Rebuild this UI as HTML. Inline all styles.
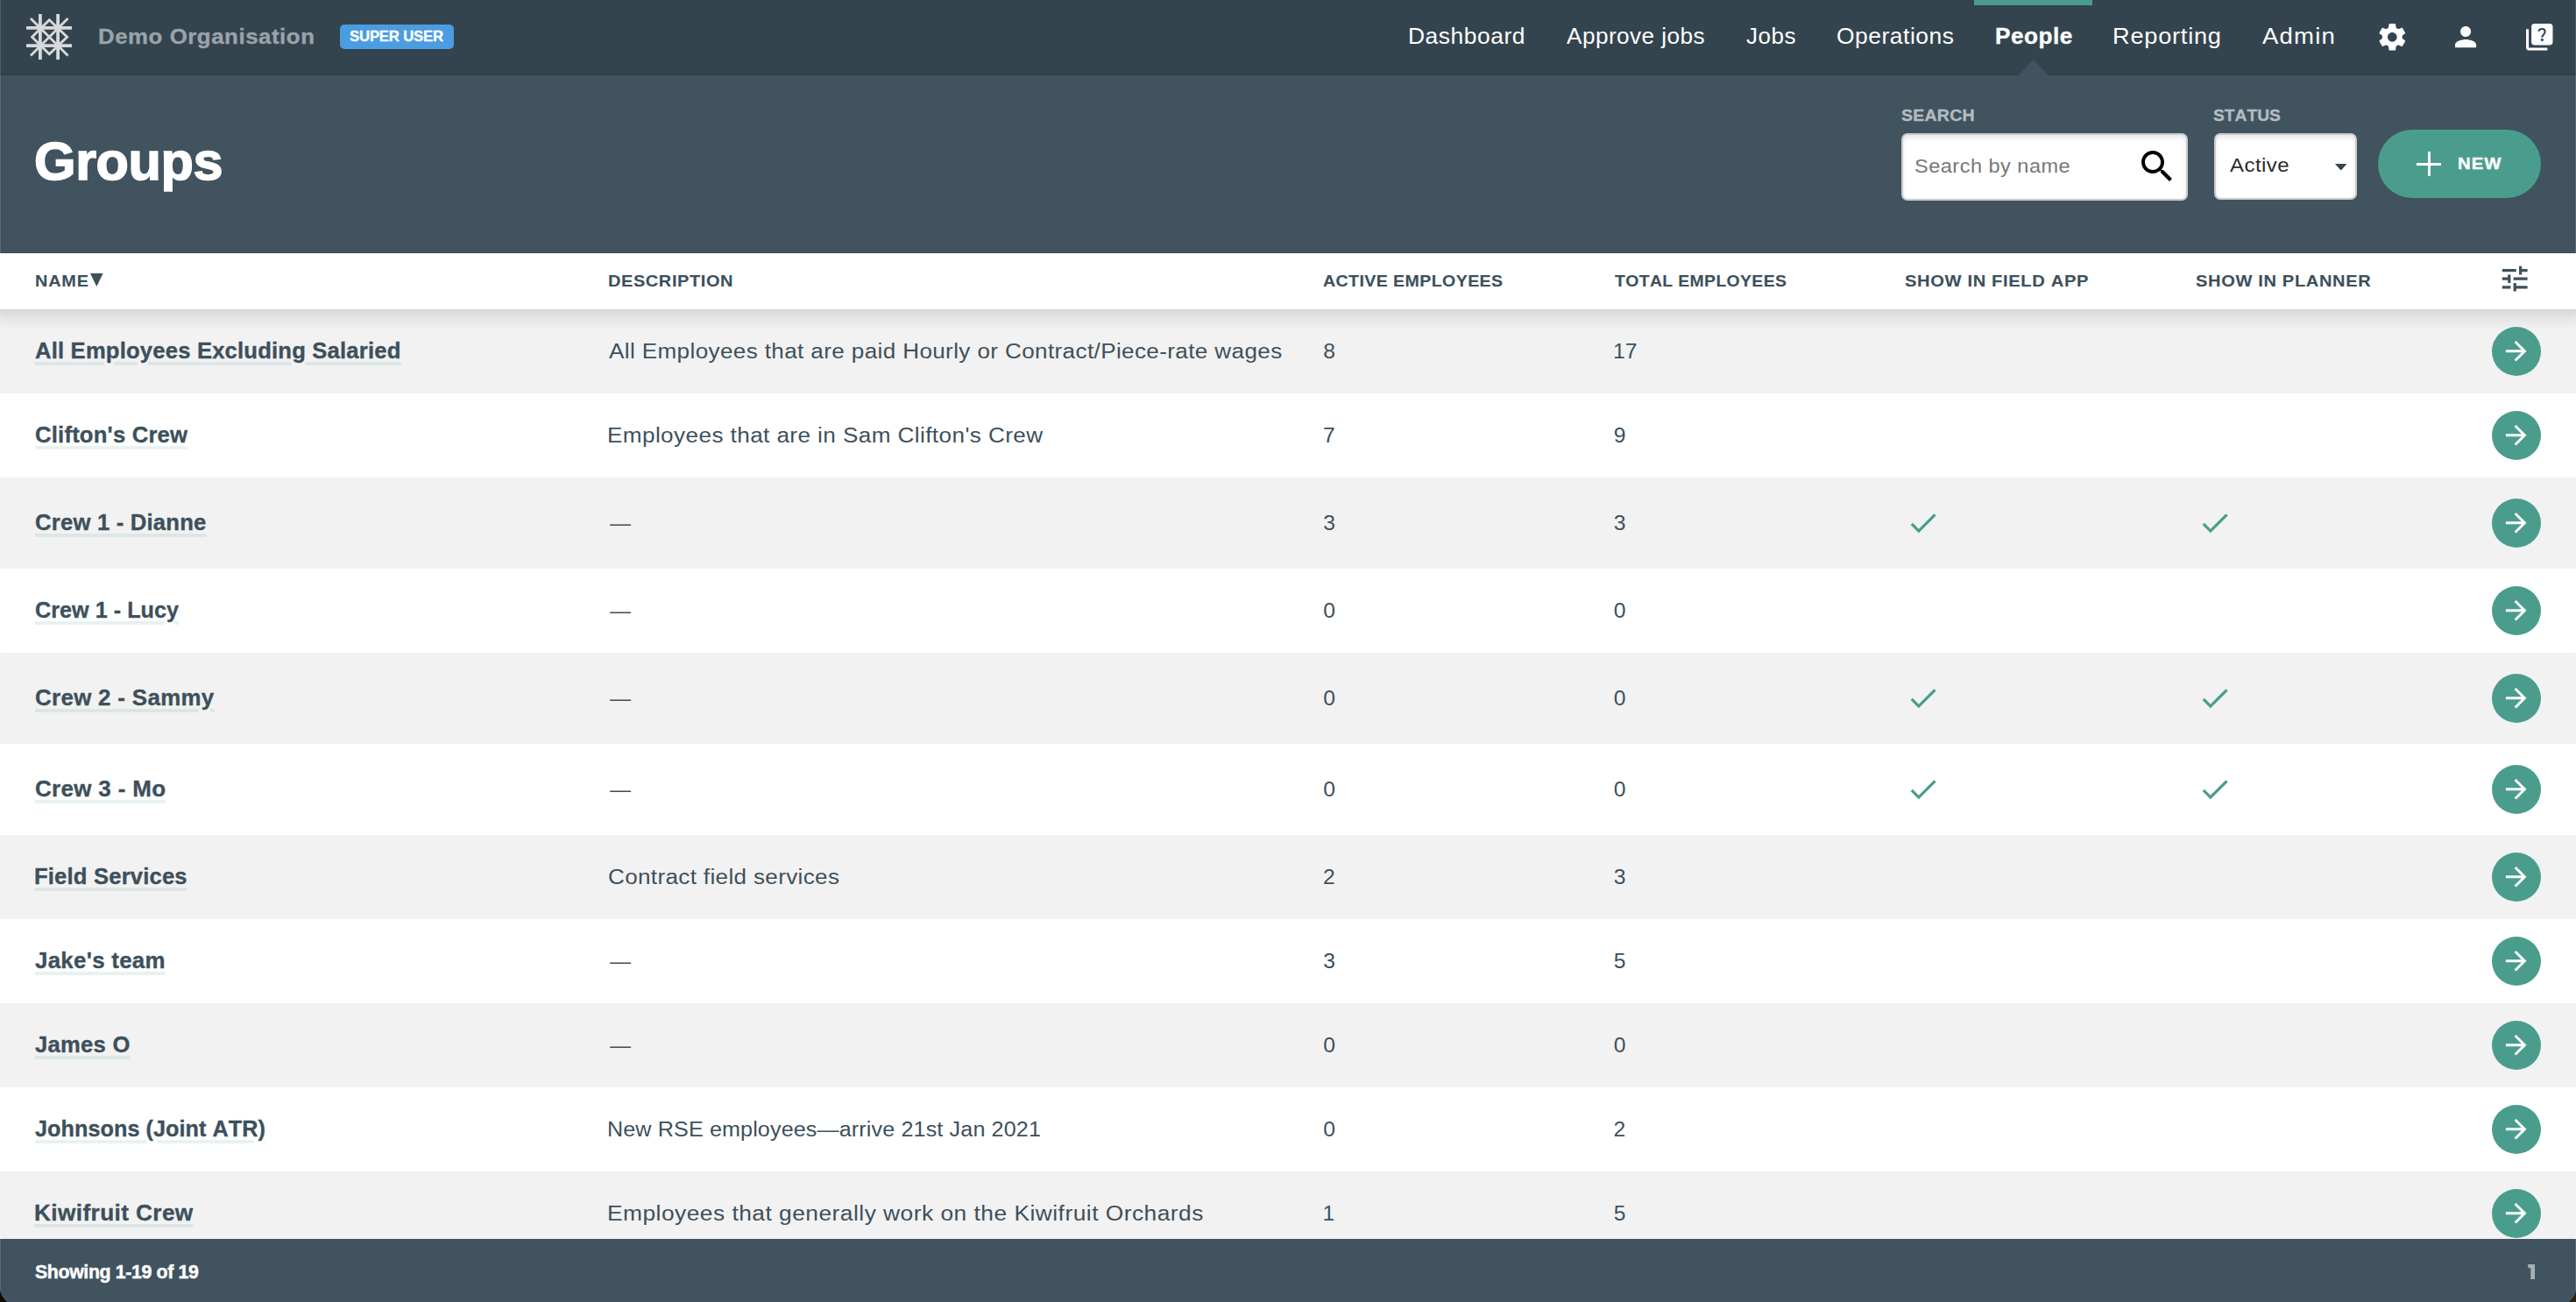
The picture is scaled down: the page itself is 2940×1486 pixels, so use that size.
<!DOCTYPE html>
<html><head><meta charset="utf-8"><title>Groups</title>
<style>
html,body{margin:0;padding:0;}
body{width:2940px;height:1486px;position:relative;overflow:hidden;background:#fff;font-family:"Liberation Sans",sans-serif;font-kerning:none;}
.t{position:absolute;white-space:nowrap;}
.inp{position:absolute;box-sizing:border-box;background:#fff;border:2px solid #cacaca;border-radius:7px;box-shadow:inset 0 3px 5px rgba(0,0,0,0.10);}
</style></head><body>
<div style="position:absolute;left:0;top:0;width:2940px;height:86px;background:#33444f;"></div>
<div style="position:absolute;left:0;top:83px;width:2940px;height:3px;background:linear-gradient(rgba(0,0,0,0),rgba(0,0,0,0.10));"></div>
<svg style="position:absolute;left:0;top:0" width="120" height="86" viewBox="0 0 120 86">
<g stroke="#d8d9da" stroke-width="3.8" fill="none" stroke-linecap="butt">
<line x1="45.9" y1="16" x2="45.9" y2="68"/>
<line x1="66.1" y1="16" x2="66.1" y2="68"/>
<line x1="30" y1="31.9" x2="82" y2="31.9"/>
<line x1="30" y1="52.1" x2="82" y2="52.1"/>
<line x1="35" y1="21" x2="77.5" y2="63.5" stroke-width="2.9"/>
<line x1="77.5" y1="21" x2="35" y2="63.5" stroke-width="2.9"/>
<polygon points="56.3,22.8 76.6,42.3 56.3,61.8 36.6,42.3" stroke-width="2.9"/>
</g></svg>
<div class="t " style="left:111.67px;top:30.32px;font-size:24.3px;line-height:24.3px;font-weight:700;color:#9aa3a8;letter-spacing:0.532px;transform:scaleX(1.0614);transform-origin:0 0;-webkit-text-stroke:0.35px #9aa3a8;">Demo Organisation</div>
<div style="position:absolute;left:388px;top:28px;width:130px;height:28px;border-radius:5px;background:#4a9de0;"></div>
<div class="t " style="left:399.22px;top:32.80px;font-size:17px;line-height:17px;font-weight:700;color:#fff;letter-spacing:-0.153px;transform:scaleX(0.9815);transform-origin:0 0;-webkit-text-stroke:0.35px #fff;">SUPER USER</div>
<div class="t " style="left:1607.24px;top:28.63px;font-size:25px;line-height:25px;font-weight:400;color:#fff;letter-spacing:0.519px;transform:scaleX(1.0554);transform-origin:0 0;">Dashboard</div>
<div class="t " style="left:1788.35px;top:28.63px;font-size:25px;line-height:25px;font-weight:400;color:#fff;letter-spacing:0.403px;transform:scaleX(1.0481);transform-origin:0 0;">Approve jobs</div>
<div class="t " style="left:1992.79px;top:28.63px;font-size:25px;line-height:25px;font-weight:400;color:#fff;letter-spacing:0.459px;transform:scaleX(1.0418);transform-origin:0 0;">Jobs</div>
<div class="t " style="left:2095.95px;top:28.63px;font-size:25px;line-height:25px;font-weight:400;color:#fff;letter-spacing:0.483px;transform:scaleX(1.0574);transform-origin:0 0;">Operations</div>
<div class="t " style="left:2276.65px;top:28.63px;font-size:25px;line-height:25px;font-weight:700;color:#fff;letter-spacing:0.471px;transform:scaleX(1.0465);transform-origin:0 0;-webkit-text-stroke:0.35px #fff;">People</div>
<div class="t " style="left:2411.27px;top:28.63px;font-size:25px;line-height:25px;font-weight:400;color:#fff;letter-spacing:0.702px;transform:scaleX(1.0874);transform-origin:0 0;">Reporting</div>
<div class="t " style="left:2582.25px;top:28.63px;font-size:25px;line-height:25px;font-weight:400;color:#fff;letter-spacing:1.063px;transform:scaleX(1.1016);transform-origin:0 0;">Admin</div>
<div style="position:absolute;left:2253px;top:0;width:135px;height:6px;background:#4a9d8c;"></div>
<svg style="position:absolute;left:2300px;top:66px" width="42" height="21" viewBox="0 0 42 21"><polygon points="3,20.5 20.7,2 38.4,20.5" fill="#40535f"/></svg>
<svg style="position:absolute;left:2711.6px;top:23.5px;" width="36.6" height="36.6" viewBox="0 0 24 24"><path d="M19.43 12.98c.04-.32.07-.64.07-.98s-.03-.66-.07-.98l2.11-1.65c.19-.15.24-.42.12-.64l-2-3.46c-.12-.22-.39-.3-.61-.22l-2.49 1c-.52-.4-1.08-.73-1.69-.98l-.38-2.65C14.46 2.18 14.25 2 14 2h-4c-.25 0-.46.18-.49.42l-.38 2.65c-.61.25-1.17.59-1.69.98l-2.49-1c-.23-.09-.49 0-.61.22l-2 3.46c-.13.22-.07.49.12.64l2.11 1.65c-.04.32-.07.65-.07.98s.03.66.07.98l-2.11 1.65c-.19.15-.24.42-.12.64l2 3.46c.12.22.39.3.61.22l2.49-1c.52.4 1.08.73 1.69.98l.38 2.65c.03.24.24.42.49.42h4c.25 0 .46-.18.49-.42l.38-2.65c.61-.25 1.17-.59 1.69-.98l2.49 1c.23.09.49 0 .61-.22l2-3.46c.12-.22.07-.49-.12-.64l-2.11-1.65zM12 15.5c-1.93 0-3.5-1.57-3.5-3.5s1.57-3.5 3.5-3.5 3.5 1.57 3.5 3.5-1.57 3.5-3.5 3.5z" fill="#fff"/></svg>
<svg style="position:absolute;left:2795.7px;top:23.9px;" width="36.2" height="36.2" viewBox="0 0 24 24"><path d="M12 12c2.21 0 4-1.79 4-4s-1.79-4-4-4-4 1.79-4 4 1.79 4 4 4zm0 2c-2.67 0-8 1.34-8 4v2h16v-2c0-2.66-5.33-4-8-4z" fill="#fff"/></svg>
<svg style="position:absolute;left:2879.6px;top:23.6px" width="36.5" height="36.5" viewBox="0 0 24 24"><path d="M4 6H2v14c0 1.1.9 2 2 2h14v-2H4V6zM20 2H8c-1.1 0-2 .9-2 2v12c0 1.1.9 2 2 2h12c1.1 0 2-.9 2-2V4c0-1.1-.9-2-2-2z" fill="#fff"/><path d="M11.3 7.6Q12 5.9 14 5.9Q16.2 5.9 16.2 8Q16.2 9.1 15.1 10.2Q14 11.3 14 12.4" fill="none" stroke="#33444f" stroke-width="1.35"/><circle cx="14.05" cy="14.1" r="1.05" fill="#33444f"/></svg>
<div style="position:absolute;left:0;top:86px;width:2940px;height:203px;background:#40535f;"></div>
<div style="position:absolute;left:0;top:288px;width:2940px;height:1px;background:rgba(0,0,0,0.12);"></div>
<div class="t " style="left:38.89px;top:153.10px;font-size:62px;line-height:62px;font-weight:700;color:#fff;letter-spacing:-0.403px;transform:scaleX(0.9862);transform-origin:0 0;-webkit-text-stroke:1.6px #fff;">Groups</div>
<div class="t " style="left:2170.04px;top:121.94px;font-size:19.2px;line-height:19.2px;font-weight:700;color:#b4bcc1;letter-spacing:0.202px;transform:scaleX(1.0195);transform-origin:0 0;-webkit-text-stroke:0.35px #b4bcc1;">SEARCH</div>
<div class="t " style="left:2526.15px;top:122.04px;font-size:19.2px;line-height:19.2px;font-weight:700;color:#b4bcc1;letter-spacing:0.008px;transform:scaleX(1.0008);transform-origin:0 0;-webkit-text-stroke:0.35px #b4bcc1;">STATUS</div>
<div class="inp" style="left:2170px;top:152px;width:327px;height:77px;"></div>
<div class="t " style="left:2185.33px;top:179.20px;font-size:22.2px;line-height:22.2px;font-weight:400;color:#777;letter-spacing:0.463px;transform:scaleX(1.0599);transform-origin:0 0;">Search by name</div>
<svg style="position:absolute;left:2438px;top:165.6px;" width="48" height="48" viewBox="0 0 24 24"><path d="M15.5 14h-.79l-.28-.27C15.41 12.59 16 11.11 16 9.5 16 5.91 13.09 3 9.5 3S3 5.91 3 9.5 5.91 16 9.5 16c1.61 0 3.09-.59 4.23-1.57l.27.28v.79l5 4.99L20.49 19l-4.99-5zm-6 0C7.01 14 5 11.99 5 9.5S7.01 5 9.5 5 14 7.01 14 9.5 11.99 14 9.5 14z" fill="#000"/></svg>
<div class="inp" style="left:2527px;top:152px;width:163px;height:76px;"></div>
<div class="t " style="left:2544.95px;top:178.16px;font-size:22.6px;line-height:22.6px;font-weight:400;color:#2b2b2b;letter-spacing:0.453px;transform:scaleX(1.0596);transform-origin:0 0;">Active</div>
<svg style="position:absolute;left:2665px;top:187px" width="13.5" height="8" viewBox="0 0 13.5 8"><polygon points="0,0 13.5,0 6.75,7.6" fill="#33434f"/></svg>
<div style="position:absolute;left:2714px;top:148px;width:186px;height:78px;border-radius:39px;background:#4a9d8c;"></div>
<div style="position:absolute;left:2758px;top:185.7px;width:28px;height:3px;background:#fff;"></div>
<div style="position:absolute;left:2770.5px;top:173.2px;width:3px;height:28px;background:#fff;"></div>
<div class="t " style="left:2805.04px;top:176.91px;font-size:19px;line-height:19px;font-weight:700;color:#fff;letter-spacing:0.963px;transform:scaleX(1.0720);transform-origin:0 0;-webkit-text-stroke:0.35px #fff;">NEW</div>
<div style="position:absolute;left:0;top:289px;width:2940px;height:1197px;background:#fff;"></div>
<div style="position:absolute;left:0;top:353px;width:2940px;height:96px;background:#f2f2f2;"></div>
<div class="t nm" style="left:39.96px;top:388.33px;font-size:25px;line-height:25px;font-weight:700;color:#3d505c;letter-spacing:0.198px;transform:scaleX(1.0237);transform-origin:0 0;-webkit-text-stroke:0.35px #3d505c;text-decoration:underline;text-decoration-color:rgba(74,157,140,0.13);text-decoration-thickness:4px;text-underline-offset:4px;">All Employees Excluding Salaried</div>
<div class="t ds" style="left:695.45px;top:388.58px;font-size:24.7px;line-height:24.7px;font-weight:400;color:#3d505c;letter-spacing:0.385px;transform:scaleX(1.0535);transform-origin:0 0;">All Employees that are paid Hourly or Contract/Piece-rate wages</div>
<div class="t num" style="left:1510.23px;top:388.58px;font-size:24.7px;line-height:24.7px;font-weight:400;color:#3d505c;letter-spacing:0.000px;">8</div>
<div class="t num" style="left:1840.92px;top:388.58px;font-size:24.7px;line-height:24.7px;font-weight:400;color:#3d505c;letter-spacing:0.000px;">17</div>
<div style="position:absolute;left:2844px;top:373.0px;width:56px;height:56px;border-radius:28px;background:#4a9d8c;"></div>
<svg style="position:absolute;left:2854.3px;top:383.3px;" width="35.4" height="35.4" viewBox="0 0 24 24"><path d="M12 4l-1.41 1.41L16.17 11H4v2h12.17l-5.58 5.59L12 20l8-8z" fill="#fff"/></svg>
<div style="position:absolute;left:0;top:449px;width:2940px;height:96px;background:#fff;"></div>
<div class="t nm" style="left:39.55px;top:484.33px;font-size:25px;line-height:25px;font-weight:700;color:#3d505c;letter-spacing:0.207px;transform:scaleX(1.0250);transform-origin:0 0;-webkit-text-stroke:0.35px #3d505c;text-decoration:underline;text-decoration-color:rgba(74,157,140,0.13);text-decoration-thickness:4px;text-underline-offset:4px;">Clifton's Crew</div>
<div class="t ds" style="left:693.36px;top:484.58px;font-size:24.7px;line-height:24.7px;font-weight:400;color:#3d505c;letter-spacing:0.410px;transform:scaleX(1.0559);transform-origin:0 0;">Employees that are in Sam Clifton's Crew</div>
<div class="t num" style="left:1510.03px;top:484.58px;font-size:24.7px;line-height:24.7px;font-weight:400;color:#3d505c;letter-spacing:0.000px;">7</div>
<div class="t num" style="left:1841.64px;top:484.58px;font-size:24.7px;line-height:24.7px;font-weight:400;color:#3d505c;letter-spacing:0.000px;">9</div>
<div style="position:absolute;left:2844px;top:469.0px;width:56px;height:56px;border-radius:28px;background:#4a9d8c;"></div>
<svg style="position:absolute;left:2854.3px;top:479.3px;" width="35.4" height="35.4" viewBox="0 0 24 24"><path d="M12 4l-1.41 1.41L16.17 11H4v2h12.17l-5.58 5.59L12 20l8-8z" fill="#fff"/></svg>
<div style="position:absolute;left:0;top:545px;width:2940px;height:104px;background:#f2f2f2;"></div>
<div class="t nm" style="left:39.55px;top:584.33px;font-size:25px;line-height:25px;font-weight:700;color:#3d505c;letter-spacing:0.216px;transform:scaleX(1.0250);transform-origin:0 0;-webkit-text-stroke:0.35px #3d505c;text-decoration:underline;text-decoration-color:rgba(74,157,140,0.13);text-decoration-thickness:4px;text-underline-offset:4px;">Crew 1 - Dianne</div>
<div class="t ds" style="left:695.50px;top:584.58px;font-size:24.7px;line-height:24.7px;font-weight:400;color:#3d505c;letter-spacing:-0.537px;transform:scaleX(0.9684);transform-origin:0 0;">—</div>
<div class="t num" style="left:1510.36px;top:584.58px;font-size:24.7px;line-height:24.7px;font-weight:400;color:#3d505c;letter-spacing:0.000px;">3</div>
<div class="t num" style="left:1841.86px;top:584.58px;font-size:24.7px;line-height:24.7px;font-weight:400;color:#3d505c;letter-spacing:0.000px;">3</div>
<svg style="position:absolute;left:2175.4px;top:577.2px;" width="39.6" height="39.6" viewBox="0 0 24 24"><path d="M9 16.17L4.83 12l-1.42 1.41L9 19 21 7l-1.41-1.41z" fill="#4a9d8c"/></svg>
<svg style="position:absolute;left:2508px;top:577.2px;" width="39.6" height="39.6" viewBox="0 0 24 24"><path d="M9 16.17L4.83 12l-1.42 1.41L9 19 21 7l-1.41-1.41z" fill="#4a9d8c"/></svg>
<div style="position:absolute;left:2844px;top:569.0px;width:56px;height:56px;border-radius:28px;background:#4a9d8c;"></div>
<svg style="position:absolute;left:2854.3px;top:579.3px;" width="35.4" height="35.4" viewBox="0 0 24 24"><path d="M12 4l-1.41 1.41L16.17 11H4v2h12.17l-5.58 5.59L12 20l8-8z" fill="#fff"/></svg>
<div style="position:absolute;left:0;top:649px;width:2940px;height:96px;background:#fff;"></div>
<div class="t nm" style="left:39.57px;top:684.33px;font-size:25px;line-height:25px;font-weight:700;color:#3d505c;letter-spacing:0.047px;transform:scaleX(1.0052);transform-origin:0 0;-webkit-text-stroke:0.35px #3d505c;text-decoration:underline;text-decoration-color:rgba(74,157,140,0.13);text-decoration-thickness:4px;text-underline-offset:4px;">Crew 1 - Lucy</div>
<div class="t ds" style="left:695.50px;top:684.58px;font-size:24.7px;line-height:24.7px;font-weight:400;color:#3d505c;letter-spacing:-0.537px;transform:scaleX(0.9684);transform-origin:0 0;">—</div>
<div class="t num" style="left:1510.34px;top:684.58px;font-size:24.7px;line-height:24.7px;font-weight:400;color:#3d505c;letter-spacing:0.000px;">0</div>
<div class="t num" style="left:1841.84px;top:684.58px;font-size:24.7px;line-height:24.7px;font-weight:400;color:#3d505c;letter-spacing:0.000px;">0</div>
<div style="position:absolute;left:2844px;top:669.0px;width:56px;height:56px;border-radius:28px;background:#4a9d8c;"></div>
<svg style="position:absolute;left:2854.3px;top:679.3px;" width="35.4" height="35.4" viewBox="0 0 24 24"><path d="M12 4l-1.41 1.41L16.17 11H4v2h12.17l-5.58 5.59L12 20l8-8z" fill="#fff"/></svg>
<div style="position:absolute;left:0;top:745px;width:2940px;height:104px;background:#f2f2f2;"></div>
<div class="t nm" style="left:39.54px;top:784.33px;font-size:25px;line-height:25px;font-weight:700;color:#3d505c;letter-spacing:0.328px;transform:scaleX(1.0344);transform-origin:0 0;-webkit-text-stroke:0.35px #3d505c;text-decoration:underline;text-decoration-color:rgba(74,157,140,0.13);text-decoration-thickness:4px;text-underline-offset:4px;">Crew 2 - Sammy</div>
<div class="t ds" style="left:695.50px;top:784.58px;font-size:24.7px;line-height:24.7px;font-weight:400;color:#3d505c;letter-spacing:-0.537px;transform:scaleX(0.9684);transform-origin:0 0;">—</div>
<div class="t num" style="left:1510.34px;top:784.58px;font-size:24.7px;line-height:24.7px;font-weight:400;color:#3d505c;letter-spacing:0.000px;">0</div>
<div class="t num" style="left:1841.84px;top:784.58px;font-size:24.7px;line-height:24.7px;font-weight:400;color:#3d505c;letter-spacing:0.000px;">0</div>
<svg style="position:absolute;left:2175.4px;top:777.2px;" width="39.6" height="39.6" viewBox="0 0 24 24"><path d="M9 16.17L4.83 12l-1.42 1.41L9 19 21 7l-1.41-1.41z" fill="#4a9d8c"/></svg>
<svg style="position:absolute;left:2508px;top:777.2px;" width="39.6" height="39.6" viewBox="0 0 24 24"><path d="M9 16.17L4.83 12l-1.42 1.41L9 19 21 7l-1.41-1.41z" fill="#4a9d8c"/></svg>
<div style="position:absolute;left:2844px;top:769.0px;width:56px;height:56px;border-radius:28px;background:#4a9d8c;"></div>
<svg style="position:absolute;left:2854.3px;top:779.3px;" width="35.4" height="35.4" viewBox="0 0 24 24"><path d="M12 4l-1.41 1.41L16.17 11H4v2h12.17l-5.58 5.59L12 20l8-8z" fill="#fff"/></svg>
<div style="position:absolute;left:0;top:849px;width:2940px;height:104px;background:#fff;"></div>
<div class="t nm" style="left:39.54px;top:888.33px;font-size:25px;line-height:25px;font-weight:700;color:#3d505c;letter-spacing:0.332px;transform:scaleX(1.0373);transform-origin:0 0;-webkit-text-stroke:0.35px #3d505c;text-decoration:underline;text-decoration-color:rgba(74,157,140,0.13);text-decoration-thickness:4px;text-underline-offset:4px;">Crew 3 - Mo</div>
<div class="t ds" style="left:695.50px;top:888.58px;font-size:24.7px;line-height:24.7px;font-weight:400;color:#3d505c;letter-spacing:-0.537px;transform:scaleX(0.9684);transform-origin:0 0;">—</div>
<div class="t num" style="left:1510.34px;top:888.58px;font-size:24.7px;line-height:24.7px;font-weight:400;color:#3d505c;letter-spacing:0.000px;">0</div>
<div class="t num" style="left:1841.84px;top:888.58px;font-size:24.7px;line-height:24.7px;font-weight:400;color:#3d505c;letter-spacing:0.000px;">0</div>
<svg style="position:absolute;left:2175.4px;top:881.2px;" width="39.6" height="39.6" viewBox="0 0 24 24"><path d="M9 16.17L4.83 12l-1.42 1.41L9 19 21 7l-1.41-1.41z" fill="#4a9d8c"/></svg>
<svg style="position:absolute;left:2508px;top:881.2px;" width="39.6" height="39.6" viewBox="0 0 24 24"><path d="M9 16.17L4.83 12l-1.42 1.41L9 19 21 7l-1.41-1.41z" fill="#4a9d8c"/></svg>
<div style="position:absolute;left:2844px;top:873.0px;width:56px;height:56px;border-radius:28px;background:#4a9d8c;"></div>
<svg style="position:absolute;left:2854.3px;top:883.3px;" width="35.4" height="35.4" viewBox="0 0 24 24"><path d="M12 4l-1.41 1.41L16.17 11H4v2h12.17l-5.58 5.59L12 20l8-8z" fill="#fff"/></svg>
<div style="position:absolute;left:0;top:953px;width:2940px;height:96px;background:#f2f2f2;"></div>
<div class="t nm" style="left:38.89px;top:988.33px;font-size:25px;line-height:25px;font-weight:700;color:#3d505c;letter-spacing:0.191px;transform:scaleX(1.0230);transform-origin:0 0;-webkit-text-stroke:0.35px #3d505c;text-decoration:underline;text-decoration-color:rgba(74,157,140,0.13);text-decoration-thickness:4px;text-underline-offset:4px;">Field Services</div>
<div class="t ds" style="left:694.18px;top:988.58px;font-size:24.7px;line-height:24.7px;font-weight:400;color:#3d505c;letter-spacing:0.362px;transform:scaleX(1.0523);transform-origin:0 0;">Contract field services</div>
<div class="t num" style="left:1510.06px;top:988.58px;font-size:24.7px;line-height:24.7px;font-weight:400;color:#3d505c;letter-spacing:0.000px;">2</div>
<div class="t num" style="left:1841.86px;top:988.58px;font-size:24.7px;line-height:24.7px;font-weight:400;color:#3d505c;letter-spacing:0.000px;">3</div>
<div style="position:absolute;left:2844px;top:973.0px;width:56px;height:56px;border-radius:28px;background:#4a9d8c;"></div>
<svg style="position:absolute;left:2854.3px;top:983.3px;" width="35.4" height="35.4" viewBox="0 0 24 24"><path d="M12 4l-1.41 1.41L16.17 11H4v2h12.17l-5.58 5.59L12 20l8-8z" fill="#fff"/></svg>
<div style="position:absolute;left:0;top:1049px;width:2940px;height:96px;background:#fff;"></div>
<div class="t nm" style="left:40.21px;top:1084.33px;font-size:25px;line-height:25px;font-weight:700;color:#3d505c;letter-spacing:0.296px;transform:scaleX(1.0331);transform-origin:0 0;-webkit-text-stroke:0.35px #3d505c;text-decoration:underline;text-decoration-color:rgba(74,157,140,0.13);text-decoration-thickness:4px;text-underline-offset:4px;">Jake's team</div>
<div class="t ds" style="left:695.50px;top:1084.58px;font-size:24.7px;line-height:24.7px;font-weight:400;color:#3d505c;letter-spacing:-0.537px;transform:scaleX(0.9684);transform-origin:0 0;">—</div>
<div class="t num" style="left:1510.36px;top:1084.58px;font-size:24.7px;line-height:24.7px;font-weight:400;color:#3d505c;letter-spacing:0.000px;">3</div>
<div class="t num" style="left:1841.81px;top:1084.58px;font-size:24.7px;line-height:24.7px;font-weight:400;color:#3d505c;letter-spacing:0.000px;">5</div>
<div style="position:absolute;left:2844px;top:1069.0px;width:56px;height:56px;border-radius:28px;background:#4a9d8c;"></div>
<svg style="position:absolute;left:2854.3px;top:1079.3px;" width="35.4" height="35.4" viewBox="0 0 24 24"><path d="M12 4l-1.41 1.41L16.17 11H4v2h12.17l-5.58 5.59L12 20l8-8z" fill="#fff"/></svg>
<div style="position:absolute;left:0;top:1145px;width:2940px;height:96px;background:#f2f2f2;"></div>
<div class="t nm" style="left:40.21px;top:1180.33px;font-size:25px;line-height:25px;font-weight:700;color:#3d505c;letter-spacing:0.266px;transform:scaleX(1.0239);transform-origin:0 0;-webkit-text-stroke:0.35px #3d505c;text-decoration:underline;text-decoration-color:rgba(74,157,140,0.13);text-decoration-thickness:4px;text-underline-offset:4px;">James O</div>
<div class="t ds" style="left:695.50px;top:1180.58px;font-size:24.7px;line-height:24.7px;font-weight:400;color:#3d505c;letter-spacing:-0.537px;transform:scaleX(0.9684);transform-origin:0 0;">—</div>
<div class="t num" style="left:1510.34px;top:1180.58px;font-size:24.7px;line-height:24.7px;font-weight:400;color:#3d505c;letter-spacing:0.000px;">0</div>
<div class="t num" style="left:1841.84px;top:1180.58px;font-size:24.7px;line-height:24.7px;font-weight:400;color:#3d505c;letter-spacing:0.000px;">0</div>
<div style="position:absolute;left:2844px;top:1165.0px;width:56px;height:56px;border-radius:28px;background:#4a9d8c;"></div>
<svg style="position:absolute;left:2854.3px;top:1175.3px;" width="35.4" height="35.4" viewBox="0 0 24 24"><path d="M12 4l-1.41 1.41L16.17 11H4v2h12.17l-5.58 5.59L12 20l8-8z" fill="#fff"/></svg>
<div style="position:absolute;left:0;top:1241px;width:2940px;height:96px;background:#fff;"></div>
<div class="t nm" style="left:40.22px;top:1276.33px;font-size:25px;line-height:25px;font-weight:700;color:#3d505c;letter-spacing:0.065px;transform:scaleX(1.0073);transform-origin:0 0;-webkit-text-stroke:0.35px #3d505c;text-decoration:underline;text-decoration-color:rgba(74,157,140,0.13);text-decoration-thickness:4px;text-underline-offset:4px;">Johnsons (Joint ATR)</div>
<div class="t ds" style="left:693.44px;top:1276.58px;font-size:24.7px;line-height:24.7px;font-weight:400;color:#3d505c;letter-spacing:0.140px;transform:scaleX(1.0165);transform-origin:0 0;">New RSE employees—arrive 21st Jan 2021</div>
<div class="t num" style="left:1510.34px;top:1276.58px;font-size:24.7px;line-height:24.7px;font-weight:400;color:#3d505c;letter-spacing:0.000px;">0</div>
<div class="t num" style="left:1841.56px;top:1276.58px;font-size:24.7px;line-height:24.7px;font-weight:400;color:#3d505c;letter-spacing:0.000px;">2</div>
<div style="position:absolute;left:2844px;top:1261.0px;width:56px;height:56px;border-radius:28px;background:#4a9d8c;"></div>
<svg style="position:absolute;left:2854.3px;top:1271.3px;" width="35.4" height="35.4" viewBox="0 0 24 24"><path d="M12 4l-1.41 1.41L16.17 11H4v2h12.17l-5.58 5.59L12 20l8-8z" fill="#fff"/></svg>
<div style="position:absolute;left:0;top:1337px;width:2940px;height:96px;background:#f2f2f2;"></div>
<div class="t nm" style="left:38.85px;top:1372.33px;font-size:25px;line-height:25px;font-weight:700;color:#3d505c;letter-spacing:0.384px;transform:scaleX(1.0471);transform-origin:0 0;-webkit-text-stroke:0.35px #3d505c;text-decoration:underline;text-decoration-color:rgba(74,157,140,0.13);text-decoration-thickness:4px;text-underline-offset:4px;">Kiwifruit Crew</div>
<div class="t ds" style="left:693.34px;top:1372.58px;font-size:24.7px;line-height:24.7px;font-weight:400;color:#3d505c;letter-spacing:0.465px;transform:scaleX(1.0657);transform-origin:0 0;">Employees that generally work on the Kiwifruit Orchards</div>
<div class="t num" style="left:1509.42px;top:1372.58px;font-size:24.7px;line-height:24.7px;font-weight:400;color:#3d505c;letter-spacing:0.000px;">1</div>
<div class="t num" style="left:1841.81px;top:1372.58px;font-size:24.7px;line-height:24.7px;font-weight:400;color:#3d505c;letter-spacing:0.000px;">5</div>
<div style="position:absolute;left:2844px;top:1357.0px;width:56px;height:56px;border-radius:28px;background:#4a9d8c;"></div>
<svg style="position:absolute;left:2854.3px;top:1367.3px;" width="35.4" height="35.4" viewBox="0 0 24 24"><path d="M12 4l-1.41 1.41L16.17 11H4v2h12.17l-5.58 5.59L12 20l8-8z" fill="#fff"/></svg>
<div style="position:absolute;left:0;top:289px;width:2940px;height:64px;background:#fff;"></div>
<div style="position:absolute;left:0;top:353px;width:2940px;height:24px;background:linear-gradient(rgba(0,0,0,0.115),rgba(0,0,0,0.06) 40%,rgba(0,0,0,0));"></div>
<div class="t " style="left:39.67px;top:311.75px;font-size:18.6px;line-height:18.6px;font-weight:700;color:#3d505c;letter-spacing:0.761px;transform:scaleX(1.0694);transform-origin:0 0;-webkit-text-stroke:0.1px #3d505c;">NAME</div>
<svg style="position:absolute;left:103px;top:312px" width="15" height="15" viewBox="0 0 15 15"><polygon points="0,0 14.6,0 7.3,15" fill="#3d505c"/></svg>
<div class="t " style="left:693.66px;top:311.75px;font-size:18.6px;line-height:18.6px;font-weight:700;color:#3d505c;letter-spacing:0.566px;transform:scaleX(1.0731);transform-origin:0 0;-webkit-text-stroke:0.1px #3d505c;">DESCRIPTION</div>
<div class="t " style="left:1510.01px;top:311.75px;font-size:18.6px;line-height:18.6px;font-weight:700;color:#3d505c;letter-spacing:0.405px;transform:scaleX(1.0509);transform-origin:0 0;-webkit-text-stroke:0.1px #3d505c;">ACTIVE EMPLOYEES</div>
<div class="t " style="left:1842.78px;top:311.75px;font-size:18.6px;line-height:18.6px;font-weight:700;color:#3d505c;letter-spacing:0.357px;transform:scaleX(1.0429);transform-origin:0 0;-webkit-text-stroke:0.1px #3d505c;">TOTAL EMPLOYEES</div>
<div class="t " style="left:2174.42px;top:311.75px;font-size:18.6px;line-height:18.6px;font-weight:700;color:#3d505c;letter-spacing:0.587px;transform:scaleX(1.0835);transform-origin:0 0;-webkit-text-stroke:0.1px #3d505c;">SHOW IN FIELD APP</div>
<div class="t " style="left:2506.42px;top:311.75px;font-size:18.6px;line-height:18.6px;font-weight:700;color:#3d505c;letter-spacing:0.610px;transform:scaleX(1.0786);transform-origin:0 0;-webkit-text-stroke:0.1px #3d505c;">SHOW IN PLANNER</div>
<svg style="position:absolute;left:2850.7px;top:299.1px;" width="38.4" height="38.4" viewBox="0 0 24 24"><path d="M3 17v2h6v-2H3zM3 5v2h10V5H3zm10 16v-2h8v-2h-8v-2h-2v6h2zM7 9v2H3v2h4v2h2V9H7zm14 4v-2H11v2h10zm-6-4h2V7h4V5h-4V3h-2v6z" fill="#3d505c"/></svg>
<div style="position:absolute;left:0;top:1414px;width:2940px;height:72px;background:#40535f;"></div>
<div class="t " style="left:39.69px;top:1440.52px;font-size:22.3px;line-height:22.3px;font-weight:700;color:#fff;letter-spacing:-0.372px;transform:scaleX(0.9548);transform-origin:0 0;-webkit-text-stroke:0.5px #fff;">Showing 1-19 of 19</div>
<svg style="position:absolute;left:2880px;top:1440px" width="20" height="24" viewBox="2880 1440 20 24"><polygon points="2884.9,1443 2893,1443 2893,1460 2888.3,1460 2888.3,1447.3 2885.6,1447.3" fill="#a6afb3"/></svg>
<div style="position:absolute;left:0;top:0;width:1px;height:1486px;background:rgba(255,255,255,0.14);"></div>
<div style="position:absolute;left:2939px;top:0;width:1px;height:1486px;background:rgba(255,255,255,0.14);"></div>
<svg style="position:absolute;left:0;top:1456px" width="30" height="30" viewBox="0 0 30 30"><path d="M0 14.5 C0.6 20.5 4 26 8.8 30 L0 30 Z" fill="#0a0c05"/><path d="M0 14.5 C0.6 20.5 4 26 8.8 30" fill="none" stroke="rgba(120,145,165,0.35)" stroke-width="1"/></svg>
<svg style="position:absolute;left:2910px;top:1456px" width="30" height="30" viewBox="0 0 30 30"><path d="M30 14.5 C29.4 20.5 26 26 21.2 30 L30 30 Z" fill="#2a2610"/><path d="M30 14.5 C29.4 20.5 26 26 21.2 30" fill="none" stroke="rgba(120,145,165,0.35)" stroke-width="1"/></svg>
</body></html>
